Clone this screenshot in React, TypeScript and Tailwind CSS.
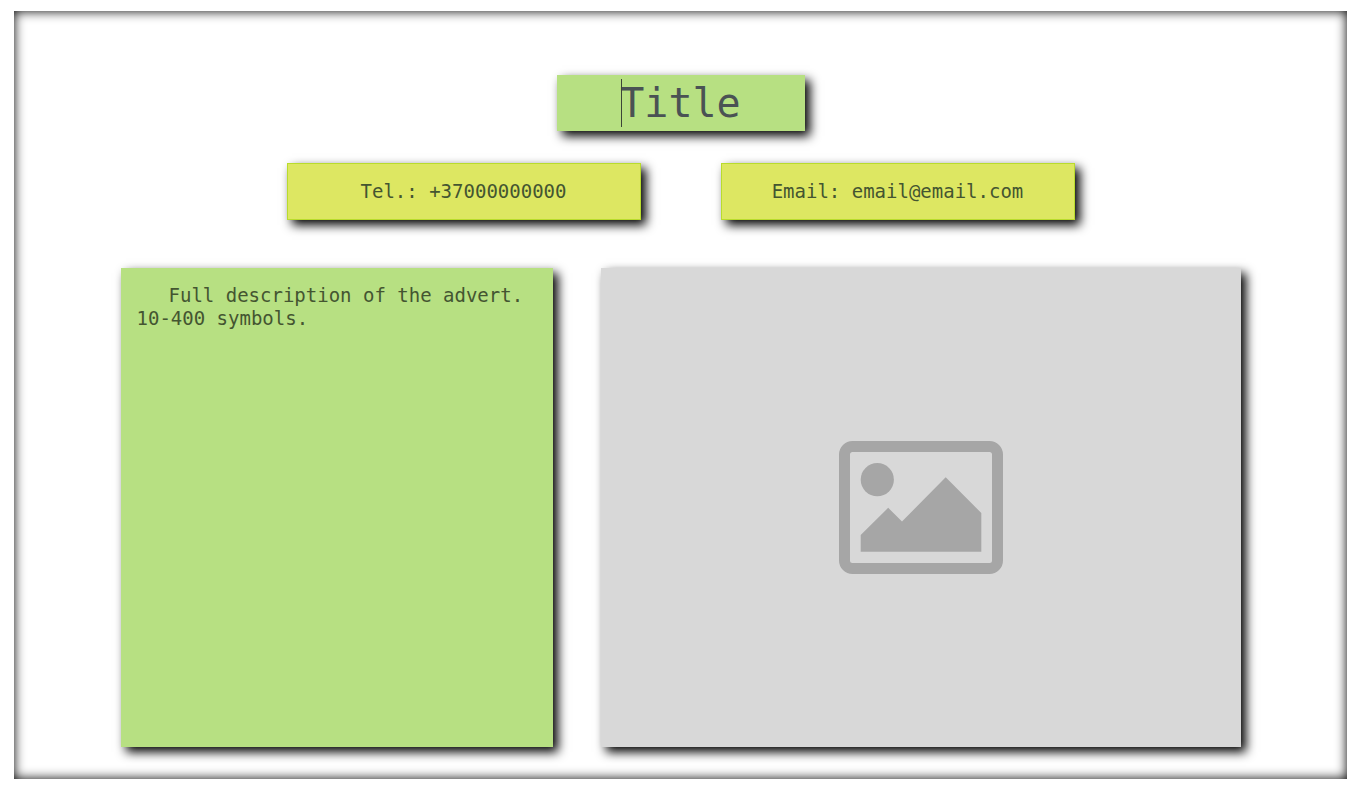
const raised = 'shadow-[5px_5px_10px_#000]';
const field =
  'w-full border border-[#b9dc2c] bg-[#dde762] px-4 pb-0.5 text-center text-[19px] leading-[23px] text-[#445531] placeholder:text-[#445531] placeholder:opacity-100 outline-none';

function ImagePlaceholder() {
  return (
    <svg viewBox="0 0 164 133" className="h-[133px] w-[164px]" role="img" aria-label="No image">
      <rect x="5.5" y="5.5" width="153" height="122" rx="8" fill="none" stroke="#a6a6a6" strokeWidth="11" />
      <circle cx="38.3" cy="38.7" r="16.6" fill="#a6a6a6" />
      <path d="M21.7 94 49.2 66.8 63 80.5 106.7 36.3 142.3 72V110.7H21.7Z" fill="#a6a6a6" />
    </svg>
  );
}

export default function App() {
  return (
    <main className="mx-[14px] my-[11px] flex flex-col items-center bg-white px-4 pt-16 pb-8 font-['DejaVu_Sans_Mono','Liberation_Mono',monospace] shadow-[inset_0_0_12px_#000]">
      <div className={`relative w-[248px] ${raised}`}>
        <input
          type="text"
          aria-label="Title"
          placeholder="Title"
          className="block h-14 w-full bg-[#b7e082] text-center text-[40px] text-[#4a5254] outline-none placeholder:text-[#4a5254] placeholder:opacity-100"
        />
        <span className="pointer-events-none absolute top-1 left-16 h-12 w-px bg-[#3c4438]" />
      </div>

      <div className="mt-8 flex w-full max-w-[788px] gap-20">
        <input type="tel" aria-label="Telephone" placeholder="Tel.: +37000000000" className={`h-[57px] min-w-0 flex-1 ${field} ${raised}`} />
        <input type="email" aria-label="Email" placeholder="Email: email@email.com" className={`h-[57px] min-w-0 flex-1 ${field} ${raised}`} />
      </div>

      <div className="mt-12 grid w-full max-w-[1120px] grid-cols-[minmax(0,27fr)_minmax(0,40fr)] gap-12">
        <textarea
          aria-label="Description"
          placeholder="Full description of the advert. 10-400 symbols."
          className={`resize-none bg-[#b7e082] p-4 indent-8 text-[19px] leading-[23px] text-[#445531] outline-none placeholder:text-[#445531] placeholder:opacity-100 ${raised}`}
        />
        <div className={`flex aspect-[640/479] items-center justify-center bg-[#d8d8d8] ${raised}`}>
          <ImagePlaceholder />
        </div>
      </div>
    </main>
  );
}
